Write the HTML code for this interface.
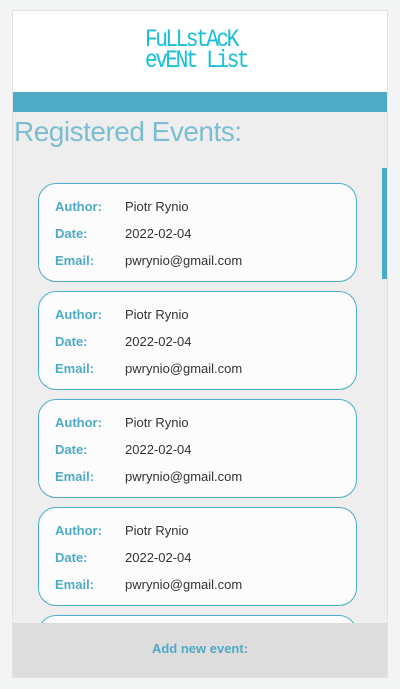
<!DOCTYPE html>
<html><head><style>
body{margin:0;background:#f3f4f4;font-family:"Liberation Sans",sans-serif;width:400px;height:689px;overflow:hidden;position:relative}
.app{position:absolute;left:12px;top:10px;width:376px;height:668px;background:#eeeeee;border:1px solid #e2e2e2;box-sizing:border-box;overflow:hidden}
.hdr{position:absolute;left:0;top:0;width:100%;height:81px;background:#fff}
.logo{position:absolute;left:132px;top:18px;color:#17c0d6;font-family:"Liberation Mono",monospace;font-size:25px;line-height:21px;letter-spacing:-3px;transform:scaleX(0.85);transform-origin:left}
.bar{position:absolute;left:0;top:81px;width:100%;height:20px;background:#4eabc6}
h1{position:absolute;left:1px;top:105px;margin:0;font-weight:normal;font-size:28px;color:#7dbdd2;letter-spacing:-0.5px}
.sb{position:absolute;left:369px;top:157px;width:6px;height:111px;background:#4eabc6}
.card{position:absolute;left:25px;width:319px;height:99px;box-sizing:border-box;border:1px solid #4eabc6;border-radius:18px;background:#fcfcfc;font-size:13px}
.row{position:absolute;left:16px;color:#333}
.row b{color:#4eabc6;display:inline-block;width:70px}
.ft{position:absolute;left:0;top:612px;width:100%;height:56px;background:#dddddd;text-align:center;color:#4eabc6;font-weight:bold;font-size:13px;line-height:52px}
</style></head><body>
<div class="app">
<div class="hdr"><div class="logo">FuLLstAcK<br>evENt List</div></div>
<div class="bar"></div>
<h1>Registered Events:</h1>
<div class="sb"></div>
<div class="card" style="top:172px"><div class="row" style="top:15px"><b>Author:</b>Piotr Rynio</div><div class="row" style="top:42px"><b>Date:</b>2022-02-04</div><div class="row" style="top:69px"><b>Email:</b>pwrynio@gmail.com</div></div>
<div class="card" style="top:280px"><div class="row" style="top:15px"><b>Author:</b>Piotr Rynio</div><div class="row" style="top:42px"><b>Date:</b>2022-02-04</div><div class="row" style="top:69px"><b>Email:</b>pwrynio@gmail.com</div></div>
<div class="card" style="top:388px"><div class="row" style="top:15px"><b>Author:</b>Piotr Rynio</div><div class="row" style="top:42px"><b>Date:</b>2022-02-04</div><div class="row" style="top:69px"><b>Email:</b>pwrynio@gmail.com</div></div>
<div class="card" style="top:496px"><div class="row" style="top:15px"><b>Author:</b>Piotr Rynio</div><div class="row" style="top:42px"><b>Date:</b>2022-02-04</div><div class="row" style="top:69px"><b>Email:</b>pwrynio@gmail.com</div></div>
<div class="card" style="top:604px"></div>
<div class="ft">Add new event:</div>
</div>
</body></html>
